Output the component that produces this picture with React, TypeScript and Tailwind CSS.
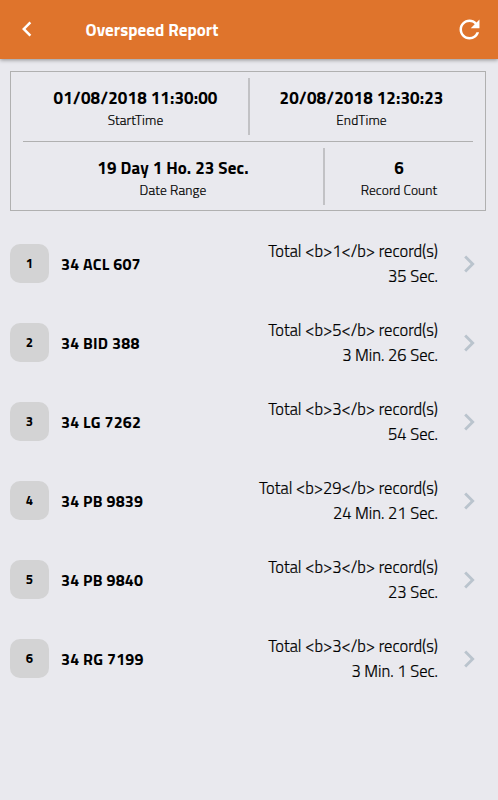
import { IoMdRefresh } from "react-icons/io";
import { MdChevronLeft, MdChevronRight } from "react-icons/md";

const records = [
  { plate: "34 ACL 607", count: 1, duration: "35 Sec." },
  { plate: "34 BID 388", count: 5, duration: "3 Min. 26 Sec." },
  { plate: "34 LG 7262", count: 3, duration: "54 Sec." },
  { plate: "34 PB 9839", count: 29, duration: "24 Min. 21 Sec." },
  { plate: "34 PB 9840", count: 3, duration: "23 Sec." },
  { plate: "34 RG 7199", count: 3, duration: "3 Min. 1 Sec." },
];

export default function App() {
  return (
    <div className="flex h-screen flex-col overflow-hidden bg-[#e9e9ee] font-['Titillium_Web',Roboto,sans-serif] text-black">
      <Header />
      <main className="flex flex-col pt-3">
        <Summary />
        <ul className="mt-[13px] flex flex-col">
          {records.map((record, i) => (
            <RecordRow key={record.plate} index={i + 1} {...record} />
          ))}
        </ul>
      </main>
    </div>
  );
}

function Header() {
  return (
    <header className="flex h-[59px] shrink-0 items-center bg-[#df742c] pr-3.5 pl-3 text-white shadow-[0_1px_4px_rgba(0,0,0,0.4)]">
      <button aria-label="Back" className="mb-px flex">
        <MdChevronLeft size={30} />
      </button>
      <h1 className="ml-[43.5px] text-[17px] leading-6 font-bold tracking-[0.06px]">
        Overspeed Report
      </h1>
      <button aria-label="Refresh" className="mb-px ml-auto flex">
        <IoMdRefresh size={29} />
      </button>
    </header>
  );
}

function Summary() {
  return (
    <section className="mr-3 ml-2.5 flex h-[140px] flex-col border border-[#b0b0b0] px-3">
      <div className="flex h-[70px] border-b border-[#b0b0b0] pt-1.5 pb-1.5">
        <Stat value="01/08/2018 11:30:00" label="StartTime" className="w-[227px] border-r-2" />
        <Stat value="20/08/2018 12:30:23" label="EndTime" className="flex-1" />
      </div>
      <div className="flex h-[68px] pt-1.5 pb-[5px]">
        <Stat value="19 Day 1 Ho. 23 Sec." label="Date Range" className="w-[302px] border-r-2" />
        <Stat value="6" label="Record Count" className="flex-1" />
      </div>
    </section>
  );
}

function Stat({ value, label, className }: { value: string; label: string; className: string }) {
  return (
    <div className={`flex flex-col items-center border-[#c2c2c5] pt-2 ${className}`}>
      <span className="text-[17px] leading-6 font-bold tracking-[0.12px]">{value}</span>
      <span className="text-[13.5px] leading-5 font-light tracking-[0.1px] [-webkit-text-stroke:0.2px]">
        {label}
      </span>
    </div>
  );
}

type RowProps = { index: number; plate: string; count: number; duration: string };

function RecordRow({ index, plate, count, duration }: RowProps) {
  return (
    <li className="flex h-[79px] items-center pr-3 pl-2.5">
      <span className="flex size-[39px] items-center justify-center rounded-[10px] bg-[#d3d3d4] text-[13px] font-bold">
        {index}
      </span>
      <span className="ml-3 text-base font-bold tracking-[0.22px]">{plate}</span>
      <div className="mb-px ml-auto text-right text-[16.5px] leading-[25px] font-light [-webkit-text-stroke:0.2px]">
        <p>{`Total <b>${count}</b> record(s)`}</p>
        <p>{duration}</p>
      </div>
      <MdChevronRight size={34} className="ml-3.5 text-[#bac4cd]" />
    </li>
  );
}
